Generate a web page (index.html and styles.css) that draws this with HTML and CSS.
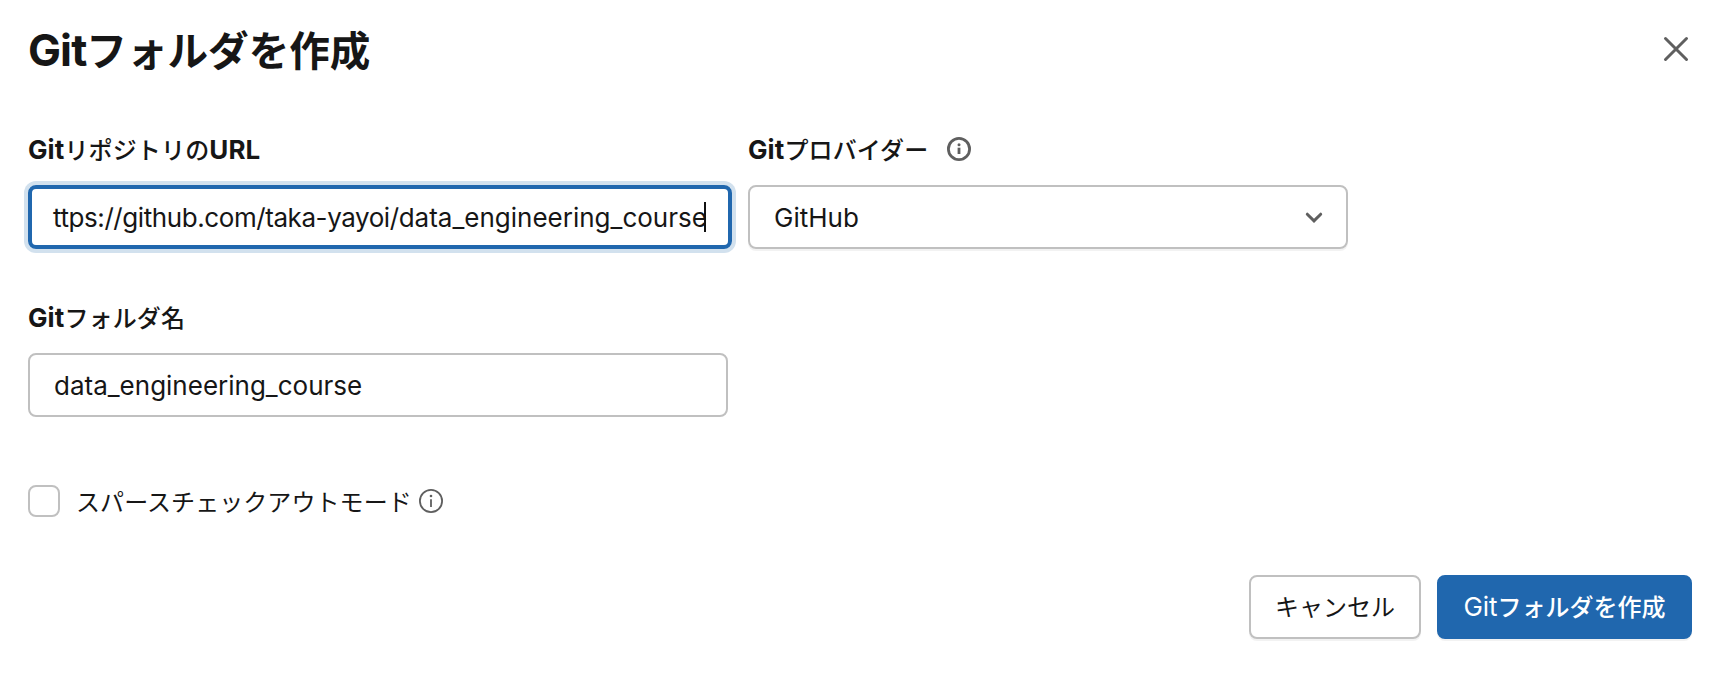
FILE: index.html
```
<!DOCTYPE html>
<html lang="ja">
<head>
<meta charset="utf-8">
<title>Gitフォルダを作成</title>
<link rel="stylesheet" href="styles.css">
</head>
<body>
<main class="dialog">
  <header class="header">
    <h1 class="title"><span class="latin">Git</span><span class="ja">フォルダを作成</span></h1>
    <button class="close" aria-label="閉じる">
      <svg width="26" height="26" viewBox="0 0 26 26"><path d="M2.5 2.5 23.5 23.5M23.5 2.5 2.5 23.5"/></svg>
    </button>
  </header>
  <div class="row">
    <div class="field field-url">
      <div class="label"><span class="latin">Git</span><span class="ja">リポジトリの</span><span class="latin">URL</span></div>
      <div class="input focused"><span class="value"><span class="host">ttps://github.com/taka-yayoi/</span>data_engineering_course</span><i class="caret"></i></div>
    </div>
    <div class="field field-provider">
      <div class="label"><span class="latin">Git</span><span class="ja">プロバイダー</span>
        <svg class="info bold" width="24" height="24" viewBox="0 0 24 24"><circle cx="12" cy="12" r="10.6"/><path d="M12 10.7V17"/><circle class="dot" cx="12" cy="7.7" r="1.5"/></svg>
      </div>
      <div class="input select"><span class="value">GitHub</span>
        <svg class="chevron" width="18" height="12" viewBox="0 0 18 12"><path d="M2.3 2.2 9 8.8 15.7 2.2"/></svg>
      </div>
    </div>
  </div>
  <div class="field field-name">
    <div class="label"><span class="latin">Git</span><span class="ja">フォルダ名</span></div>
    <div class="input"><span class="value">data_engineering_course</span></div>
  </div>
  <div class="check">
    <span class="box"></span>
    <span class="ja check-label">スパースチェックアウトモード</span>
    <svg class="info" width="24" height="24" viewBox="0 0 24 24"><circle cx="12" cy="12" r="11.1"/><path d="M12 10.2V18"/><circle class="dot" cx="12" cy="7" r="1.3"/></svg>
  </div>
  <footer class="footer">
    <button class="btn cancel"><span class="ja">キャンセル</span></button>
    <button class="btn primary"><span class="latin">Git</span><span class="ja">フォルダを作成</span></button>
  </footer>
</main>
</body>
</html>
```
FILE: styles.css
```
* { box-sizing: border-box; }
body {
  margin: 0;
  background: #fff;
  color: #161616;
  font: 26px/40px Inter, "Noto Sans CJK JP", sans-serif;
}
.dialog { height: 682px; padding: 21px 30px 0 28px; }
.header { display: flex; justify-content: space-between; height: 108px; }
.ja { font-family: "Noto Sans CJK JP", sans-serif; font-size: 24px; font-weight: 400; }
.title {
  display: flex;
  align-items: baseline;
  margin: 0;
  height: 56px;
  font-size: 44px;
  line-height: 56px;
  font-weight: 700;
}
.title .latin { letter-spacing: -0.9px; }
.title .ja { font-size: 40.6px; font-weight: 700; }
.close {
  width: 26px;
  height: 26px;
  margin: 15px 3px 0 0;
  padding: 0;
  border: 0;
  background: none;
}
svg { display: block; flex: none; fill: none; stroke: #5f5f5f; }
.close svg { stroke-width: 3; stroke-linecap: round; }
.row { display: flex; gap: 16px; height: 168px; }
.field-url { width: 704px; }
.field-provider { width: 600px; }
.field-name { width: 700px; }
.label { display: flex; align-items: baseline; height: 56px; font-weight: 700; white-space: nowrap; }
.label .latin { letter-spacing: 0.1px; }
.label .ja { font-weight: 500; letter-spacing: 0.15px; }
.info { stroke-width: 1.8; }
.info.bold { stroke-width: 2.8; margin-left: 19px; align-self: flex-start; margin-top: 8px; }
.info .dot { fill: #5f5f5f; stroke: none; }
.input {
  display: flex;
  align-items: center;
  height: 64px;
  padding: 0 24px;
  border: 2px solid #c0c0c0;
  border-radius: 8px;
}
.value { padding-top: 2px; white-space: nowrap; }
.focused {
  border: 4px solid #2067ae;
  padding: 0 22px 0 21px;
  box-shadow: 0 0 0 4px #d2e1ee;
}
.focused .value { width: 652px; }
.host { letter-spacing: -0.42px; }
.caret { flex: none; width: 2px; height: 30px; margin-left: -1px; background: #111; }
.select { justify-content: space-between; box-shadow: 0 2px 0 #f2f2f2; }
.chevron { margin: 2px -1px 0 0; stroke-width: 3; stroke-linecap: round; }
.check { display: flex; align-items: center; height: 32px; margin-top: 68px; }
.box { width: 32px; height: 32px; border: 2px solid #c0c0c0; border-radius: 8px; }
.check-label { margin: 0 7px 0 16px; letter-spacing: 0.07px; }
.footer { display: flex; justify-content: flex-end; gap: 16px; margin-top: 58px; }
.btn {
  display: flex;
  align-items: baseline;
  justify-content: center;
  height: 64px;
  padding: 9px 0 0;
  border: 2px solid #c0c0c0;
  border-radius: 8px;
  background: #fff;
  color: inherit;
  font: inherit;
  box-shadow: 0 2px 0 #f2f2f2;
}
.cancel { width: 172px; }
.primary { width: 255px; border-color: #2067ae; background: #2067ae; color: #fff; }
.primary .ja { font-weight: 500; }
```
